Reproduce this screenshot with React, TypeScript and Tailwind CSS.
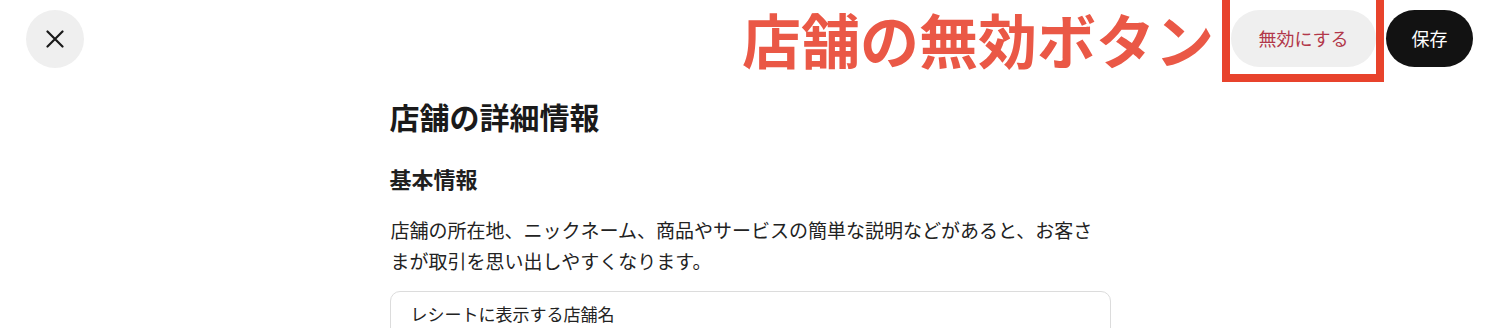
export default function App() {
  return (
    <div className="h-[328px] w-[1500px] overflow-hidden bg-white text-[#1f1f1f] [font-family:'Noto_Sans_CJK_JP','Noto_Sans',sans-serif]">
      <div className="flex h-[82px] items-start">
        <button className="ml-[26px] mt-[10px] flex h-[58px] w-[58px] items-center justify-center rounded-full bg-[#efefef] text-[#1a1a1a]">
          <svg className="h-[18px] w-[18px]" viewBox="0 0 18 18" fill="none" stroke="currentColor" strokeWidth={2.2} strokeLinecap="round">
            <path d="M1.5 1.5l15 15M16.5 1.5l-15 15" />
          </svg>
        </button>

        <div className="ml-auto mr-[8px] mt-[5px] shrink-0 whitespace-nowrap text-[59px] font-bold leading-[68px] text-[#ea5846]">
          店舗の無効ボタン
        </div>

        <div className="h-[82px] w-[162px] shrink-0 border-x-8 border-b-8 border-t-0 border-[#e8432c] pt-[10px]">
          <button className="ml-px h-[57px] w-[145px] rounded-full bg-[#efefef] text-[18px] text-[#b2384a]">
            無効にする
          </button>
        </div>

        <button className="ml-[2px] mr-[27px] mt-[10px] h-[57px] w-[87px] shrink-0 rounded-full bg-[#121212] text-[18px] text-white">
          保存
        </button>
      </div>

      <div className="mx-auto w-[721px] pt-[12px]">
        <h1 className="text-[30px] font-bold leading-[45px] text-[#1a1a1a]">店舗の詳細情報</h1>
        <h2 className="mt-[23px] text-[22px] font-semibold leading-[33px] text-[#1f1f1f]">基本情報</h2>
        <p className="mt-[19px] pl-px text-[19px] leading-[31px] text-[#222]">
          店舗の所在地、ニックネーム、商品やサービスの簡単な説明などがあると、お客さまが取引を思い出しやすくなります。
        </p>
        <div className="mt-[15px] h-[80px] rounded-[10px] border border-[#dcdcdc] px-[20px] pt-[10px]">
          <label className="block text-[17px] leading-[24px] text-[#222]">レシートに表示する店舗名</label>
        </div>
      </div>
    </div>
  );
}
